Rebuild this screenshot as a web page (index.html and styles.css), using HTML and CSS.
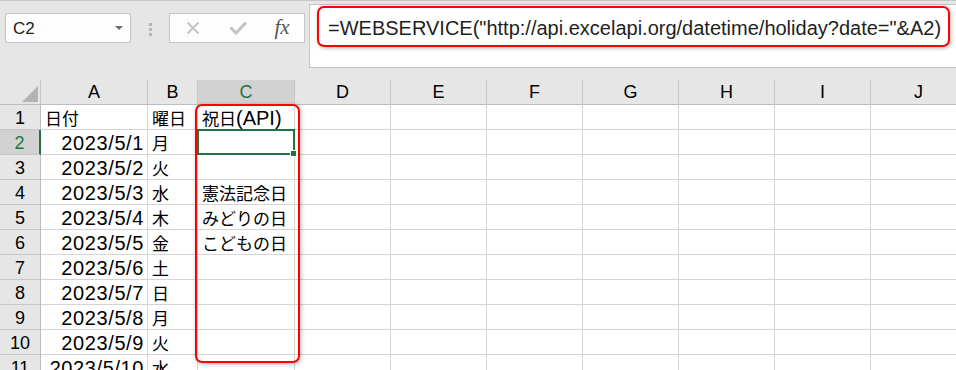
FILE: index.html
```html
<!DOCTYPE html>
<html lang="ja">
<head>
    <meta charset="UTF-8">
    <title>WEBSERVICE 祝日</title>
    <link rel="stylesheet" href="styles.css">
</head>
<body>

    <div class="toolbar">
        <div class="name-box">
            <span>C2</span>
            <span class="caret"></span>
        </div>
        <div class="grip"><i></i><i></i><i></i></div>
        <div class="fx-buttons">
            <span class="btn">
                <svg width="14" height="12" viewBox="0 0 14 12"><path d="M1.5 0.5 L12.5 11.5 M12.5 0.5 L1.5 11.5" stroke="#c3c3c3" stroke-width="2" fill="none"/></svg>
            </span>
            <span class="btn">
                <svg width="18" height="14" viewBox="0 0 18 14"><path d="M1.5 6.5 L7 12 L17 1.5" stroke="#c3c3c3" stroke-width="3" fill="none"/></svg>
            </span>
            <span class="btn fx">fx</span>
        </div>
        <div class="formula-bar">
            <div class="formula">=WEBSERVICE("http://api.excelapi.org/datetime/holiday?date="&amp;A2)</div>
            <div class="callout formula-callout"></div>
        </div>
    </div>

    <div class="sheet">
        <div class="hd corner"><span class="tri"></span></div>
        <div class="hd">A</div>
        <div class="hd">B</div>
        <div class="hd selected">C</div>
        <div class="hd">D</div>
        <div class="hd">E</div>
        <div class="hd">F</div>
        <div class="hd">G</div>
        <div class="hd">H</div>
        <div class="hd">I</div>
        <div class="hd">J</div>

        <div class="rh">1</div>
        <div class="c"><span class="jp">日付</span></div>
        <div class="c"><span class="jp">曜日</span></div>
        <div class="c"><span class="jp">祝日</span>(API)</div>
        <div class="c"></div><div class="c"></div><div class="c"></div><div class="c"></div><div class="c"></div><div class="c"></div><div class="c"></div>

        <div class="rh selected">2</div>
        <div class="c num">2023/5/1</div>
        <div class="c"><span class="jp">月</span></div>
        <div class="c active"></div>
        <div class="c"></div><div class="c"></div><div class="c"></div><div class="c"></div><div class="c"></div><div class="c"></div><div class="c"></div>

        <div class="rh">3</div>
        <div class="c num">2023/5/2</div>
        <div class="c"><span class="jp">火</span></div>
        <div class="c"></div>
        <div class="c"></div><div class="c"></div><div class="c"></div><div class="c"></div><div class="c"></div><div class="c"></div><div class="c"></div>

        <div class="rh">4</div>
        <div class="c num">2023/5/3</div>
        <div class="c"><span class="jp">水</span></div>
        <div class="c"><span class="jp">憲法記念日</span></div>
        <div class="c"></div><div class="c"></div><div class="c"></div><div class="c"></div><div class="c"></div><div class="c"></div><div class="c"></div>

        <div class="rh">5</div>
        <div class="c num">2023/5/4</div>
        <div class="c"><span class="jp">木</span></div>
        <div class="c"><span class="jp">みどりの日</span></div>
        <div class="c"></div><div class="c"></div><div class="c"></div><div class="c"></div><div class="c"></div><div class="c"></div><div class="c"></div>

        <div class="rh">6</div>
        <div class="c num">2023/5/5</div>
        <div class="c"><span class="jp">金</span></div>
        <div class="c"><span class="jp">こどもの日</span></div>
        <div class="c"></div><div class="c"></div><div class="c"></div><div class="c"></div><div class="c"></div><div class="c"></div><div class="c"></div>

        <div class="rh">7</div>
        <div class="c num">2023/5/6</div>
        <div class="c"><span class="jp">土</span></div>
        <div class="c"></div>
        <div class="c"></div><div class="c"></div><div class="c"></div><div class="c"></div><div class="c"></div><div class="c"></div><div class="c"></div>

        <div class="rh">8</div>
        <div class="c num">2023/5/7</div>
        <div class="c"><span class="jp">日</span></div>
        <div class="c"></div>
        <div class="c"></div><div class="c"></div><div class="c"></div><div class="c"></div><div class="c"></div><div class="c"></div><div class="c"></div>

        <div class="rh">9</div>
        <div class="c num">2023/5/8</div>
        <div class="c"><span class="jp">月</span></div>
        <div class="c"></div>
        <div class="c"></div><div class="c"></div><div class="c"></div><div class="c"></div><div class="c"></div><div class="c"></div><div class="c"></div>

        <div class="rh">10</div>
        <div class="c num">2023/5/9</div>
        <div class="c"><span class="jp">火</span></div>
        <div class="c"></div>
        <div class="c"></div><div class="c"></div><div class="c"></div><div class="c"></div><div class="c"></div><div class="c"></div><div class="c"></div>

        <div class="rh">11</div>
        <div class="c num">2023/5/10</div>
        <div class="c"><span class="jp">水</span></div>
        <div class="c"></div>
        <div class="c"></div><div class="c"></div><div class="c"></div><div class="c"></div><div class="c"></div><div class="c"></div><div class="c"></div>

        <div class="callout column-callout"></div>
    </div>

</body>
</html>
```

FILE: styles.css
```css
html, body {
    margin: 0;
    padding: 0;
    overflow: hidden;
    background: #fff;
}
body {
    width: 956px;
    height: 370px;
    font-family: "Liberation Sans", "Noto Sans CJK JP", sans-serif;
    color: #000;
}

/* formula toolbar */
.toolbar {
    display: flex;
    align-items: flex-start;
    height: 79px;
    background: #e6e6e6;
    border-top: 1px solid #c6c6c6;
}
.name-box {
    display: flex;
    align-items: center;
    box-sizing: border-box;
    width: 126px;
    height: 30px;
    margin: 12px 0 0 5px;
    padding: 2px 7px 0 7px;
    background: #fdfdfd;
    border: 1px solid #c6c6c6;
    font-size: 17px;
    color: #222;
}
.caret {
    margin-left: auto;
    margin-top: -3px;
    border-left: 4px solid transparent;
    border-right: 4px solid transparent;
    border-top: 4px solid #6d6d6d;
}
.grip {
    display: flex;
    flex-direction: column;
    gap: 2px;
    margin: 22px 17px 0 18px;
}
.grip i {
    display: block;
    width: 3px;
    height: 3px;
    background: #b5b5b5;
}
.fx-buttons {
    display: flex;
    box-sizing: border-box;
    width: 136px;
    height: 30px;
    margin-top: 12px;
    background: #fdfdfd;
    border: 1px solid #c6c6c6;
}
.btn {
    display: flex;
    align-items: center;
    justify-content: center;
    width: 45px;
}
.btn.fx {
    width: 44px;
    font-family: "Liberation Serif", serif;
    font-style: italic;
    font-size: 21px;
    color: #555;
    padding-bottom: 2px;
}
.formula-bar {
    position: relative;
    flex: 1;
    box-sizing: border-box;
    height: 64px;
    margin: 3px 0 0 4px;
    padding: 11px 0 0 18px;
    background: #fff;
    border: 1px solid #c6c6c6;
    border-right: none;
    font-size: 20px;
    line-height: 24px;
    color: #1f1f1f;
    white-space: nowrap;
}

/* red annotation boxes */
.callout,
.sheet > .callout {
    position: absolute;
    box-sizing: border-box;
    border: 2px solid #ff0000;
    border-radius: 7px;
    box-shadow: 1px 1px 4px rgba(0, 0, 0, 0.3);
    z-index: 2;
}
.formula-callout {
    left: 7px;
    top: 1px;
    width: 633px;
    height: 41px;
}
.column-callout {
    left: 195px;
    top: 24px;
    width: 105px;
    height: 259px;
    border-radius: 6px;
}

/* grid */
.sheet {
    position: relative;
    display: grid;
    grid-template-columns: 41px 107px 50px 97px repeat(7, 96px);
    grid-auto-rows: 25px;
}
.sheet > div {
    box-sizing: border-box;
    border-right: 1px solid #d4d4d4;
    border-bottom: 1px solid #d4d4d4;
}
.hd, .rh {
    background: #e6e6e6;
    font-size: 18px;
    line-height: 24px;
    text-align: center;
    color: #000;
}
.sheet > .hd {
    border-right-color: #c6c6c6;
    border-bottom-color: #bdbdbd;
}
.sheet > .rh {
    padding-top: 2px;
    line-height: 22px;
    border-right-color: #bdbdbd;
    border-bottom-color: #c6c6c6;
}
.sheet > .selected {
    background: #d2d2d2;
    color: #217346;
}
.sheet > .rh.selected {
    border-right: 2px solid #217346;
}
.corner {
    display: flex;
    align-items: flex-end;
    justify-content: flex-end;
    padding: 0 2px 2px 0;
}
.tri {
    width: 0;
    height: 0;
    border-left: 16px solid transparent;
    border-bottom: 16px solid #b4b4b4;
}
.c {
    padding: 2px 4px 0 4px;
    font-size: 20px;
    line-height: 22px;
    white-space: nowrap;
    overflow: hidden;
}
.c.num {
    text-align: right;
    padding-right: 3px;
    letter-spacing: 0.6px;
}
.jp {
    font-family: "Noto Sans CJK JP", sans-serif;
    font-size: 17px;
    letter-spacing: 0;
}
.c.active {
    position: relative;
    overflow: visible;
}
.c.active::after {
    content: "";
    position: absolute;
    left: -1px;
    top: -1px;
    right: -1px;
    bottom: -1px;
    border: 2px solid #217346;
}
.c.active::before {
    content: "";
    position: absolute;
    right: -3px;
    bottom: -3px;
    width: 5px;
    height: 5px;
    background: #217346;
    border: 1px solid #fff;
    z-index: 1;
}
```
